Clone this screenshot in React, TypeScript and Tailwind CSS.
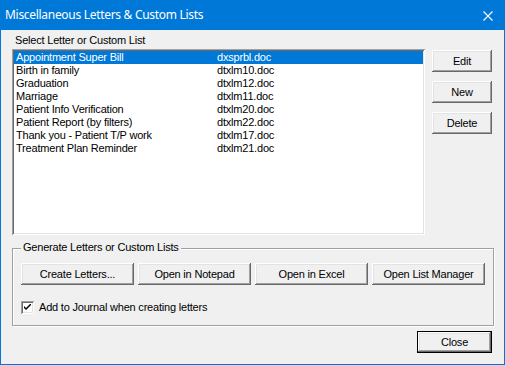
import React from "react";

const letters = [
  { name: "Appointment Super Bill", file: "dxsprbl.doc" },
  { name: "Birth in family", file: "dtxlm10.doc" },
  { name: "Graduation", file: "dtxlm12.doc" },
  { name: "Marriage", file: "dtxlm11.doc" },
  { name: "Patient Info Verification", file: "dtxlm20.doc" },
  { name: "Patient Report (by filters)", file: "dtxlm22.doc" },
  { name: "Thank you - Patient T/P work", file: "dtxlm17.doc" },
  { name: "Treatment Plan Reminder", file: "dtxlm21.doc" },
];

const raised =
  "bg-[#f0f0f0] shadow-[inset_-1px_-1px_#696969,inset_1px_1px_#ffffff,inset_-2px_-2px_#a0a0a0,inset_2px_2px_#e3e3e3]";

function Button({ label, className }: { label: string; className: string }) {
  return (
    <button
      className={`${raised} ${className} flex items-center justify-center text-[11px] leading-[13px] tracking-[-0.2px] text-black`}
    >
      {label}
    </button>
  );
}

export default function App() {
  return (
    <div
      className="flex h-[365px] w-[505px] flex-col bg-[#0078d7] px-px pb-px"
      style={{ fontFamily: '"Liberation Sans", Arial, sans-serif' }}
    >
      {/* title bar */}
      <div className="flex h-[30px] items-center justify-between pl-[4px] pr-[11px] text-white">
        <span
          className="text-[12px] tracking-[-0.3px]"
          style={{ fontFamily: '"Noto Sans", "Open Sans", sans-serif' }}
        >
          Miscellaneous Letters &amp; Custom Lists
        </span>
        <svg width="10" height="10" viewBox="0 0 10 10" className="mt-[1px]">
          <path d="M0.5 0.5 L9.5 9.5 M9.5 0.5 L0.5 9.5" stroke="#fff" strokeWidth="1.1" />
        </svg>
      </div>

      <div className="flex flex-1 flex-col bg-[#f0f0f0] pl-[11px] text-[11px] leading-[13px] tracking-[-0.2px] text-black">
        <div className="mt-[4px] pl-[3px]">Select Letter or Custom List</div>

        <div className="mt-[2px] flex gap-[7px]">
          <div className="h-[186px] w-[413px] bg-white p-[2px] shadow-[inset_1px_1px_#a0a0a0,inset_-1px_-1px_#ffffff,inset_2px_2px_#696969,inset_-2px_-2px_#e3e3e3]">
            {letters.map((l, i) => (
              <div
                key={l.name}
                className={`flex h-[13px] pl-[2px] ${i === 0 ? "bg-[#0078d7] text-white" : ""}`}
              >
                <span className="w-[201px]">{l.name}</span>
                <span>{l.file}</span>
              </div>
            ))}
          </div>
          <div className="mt-[1px] flex flex-col gap-[9px]">
            <Button label="Edit" className="h-[22px] w-[60px]" />
            <Button label="New" className="h-[22px] w-[60px]" />
            <Button label="Delete" className="h-[22px] w-[60px]" />
          </div>
        </div>

        <div className="relative mt-[13px] h-[78px] w-[482px] border border-[#a0a0a0] shadow-[inset_1px_1px_#ffffff,1px_1px_#ffffff]">
          <span className="absolute left-[8px] top-[-8px] bg-[#f0f0f0] px-[2px]">
            Generate Letters or Custom Lists
          </span>
          <div className="ml-[8px] mt-[14px] flex gap-[4px]">
            <Button label="Create Letters..." className="h-[22px] w-[113px]" />
            <Button label="Open in Notepad" className="h-[22px] w-[113px]" />
            <Button label="Open in Excel" className="h-[22px] w-[113px]" />
            <Button label="Open List Manager" className="h-[22px] w-[113px]" />
          </div>
          <div className="ml-[8px] mt-[16px] flex items-center gap-[5px]">
            <div className="flex h-[13px] w-[13px] items-center justify-center bg-white shadow-[inset_1px_1px_#a0a0a0,inset_-1px_-1px_#ffffff,inset_2px_2px_#696969,inset_-2px_-2px_#e3e3e3]">
              <svg width="7" height="7" viewBox="0 0 7 7">
                <path d="M0 2 L0 4 L2 6 L7 1 L7 -1 L2 4 Z" fill="#000" />
              </svg>
            </div>
            <span>Add to Journal when creating letters</span>
          </div>
        </div>

        <div className="mr-[12px] mt-[5px] flex justify-end">
          <div className="border border-[#000]">
            <Button label="Close" className="h-[20px] w-[73px]" />
          </div>
        </div>
      </div>
    </div>
  );
}
